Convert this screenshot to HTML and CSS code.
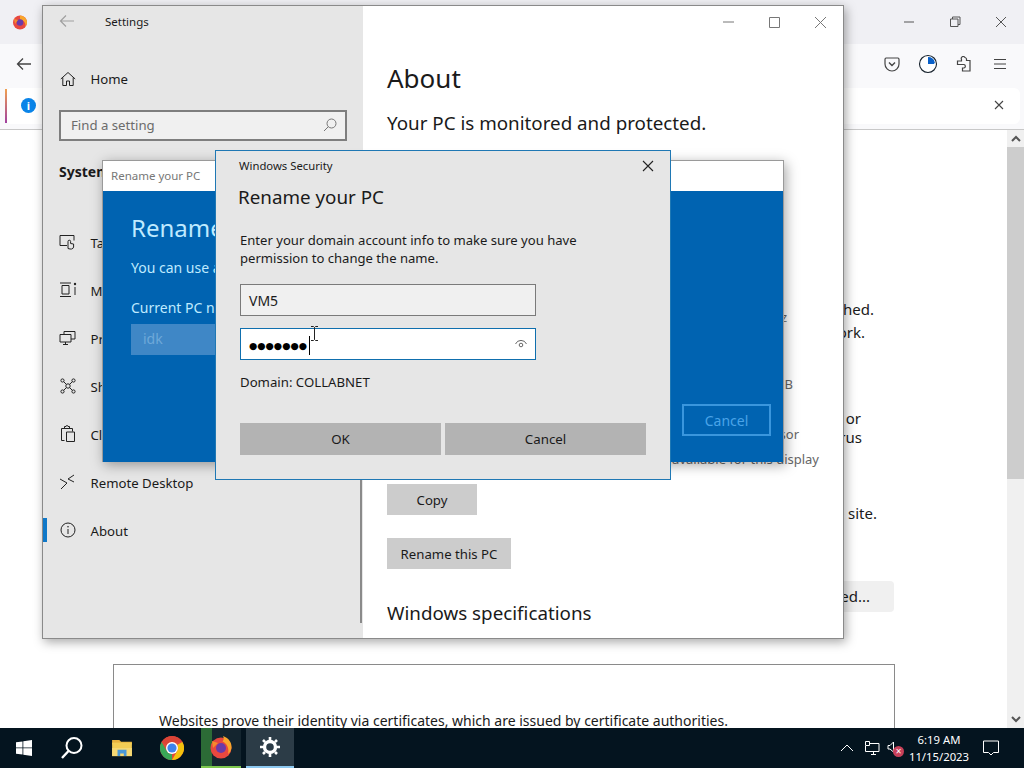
FILE: index.html
```html
<!DOCTYPE html>
<html lang="en">
<head>
<meta charset="utf-8">
<title>Rename your PC</title>
<link rel="stylesheet" href="styles.css">
</head>
<body>
<div class="desktop">
  <div class="browser">
    <div class="ff-title">
      <svg class="ff-logo" width="16" height="16" viewBox="0 0 16 16"><circle cx="8" cy="8.500" r="7" fill="#e8483f"/><path d="M8 1.500a7 7 0 0 1 7 7c0 1.500-.6 3-1.500 4 .3-3-1-6-5.500-7z" fill="#f9a52b"/><circle cx="8" cy="8.500" r="3.300" fill="#6b3aa8"/><path d="M2 5l4 1-3 4z" fill="#f58a2c"/></svg>
      <div class="win-ctrls ff-ctrls">
        <svg width="46" height="44" viewBox="0 0 46 44"><path d="M18 22h10" stroke="#555" fill="none"/></svg>
        <svg width="46" height="44" viewBox="0 0 46 44"><path d="M18.500 26.500h7.500v-7.500h-7.500zM20.500 19v-2h7.500v7.500h-2" stroke="#555" fill="none"/></svg>
        <svg width="46" height="44" viewBox="0 0 46 44"><path d="M18 17l10 10M28 17l-10 10" stroke="#555" fill="none"/></svg>
      </div>
    </div>
    <div class="ff-toolbar">
      <svg width="16" height="14" viewBox="0 0 16 14"><path d="M15 7H2M7 1.500L1.500 7 7 12.500" stroke="#444" stroke-width="1.300" fill="none"/></svg>
      <div class="ff-tools">
        <svg width="16" height="16" viewBox="0 0 16 16"><path d="M2 2h12a1.500 1.500 0 0 1 1 1.500V8a7 7 0 0 1-14 0V3.500A1.500 1.500 0 0 1 2 2z" stroke="#444" stroke-width="1.200" fill="none"/><path d="M5 6.500l3 3 3-3" stroke="#444" stroke-width="1.400" fill="none"/></svg>
        <svg width="20" height="20" viewBox="0 0 20 20"><circle cx="10" cy="10" r="8.500" fill="#fff" stroke="#15202b" stroke-width="1.100"/><path d="M10 3a7 7 0 0 1 6.800 5.500L16 10h-6z" fill="#0a60c8"/></svg>
        <svg width="16" height="16" viewBox="0 0 16 16"><path d="M9 1.500a2 2 0 0 1 1.500 1.500v1.500H14V15H6.500v-3H8a1.800 1.800 0 0 0 0-3.500H1.500V5h4V3.500A2 2 0 0 1 9 1.500z" stroke="#444" stroke-width="1.200" fill="none"/></svg>
        <svg class="ff-menu" width="14" height="12" viewBox="0 0 14 12"><path d="M1 1.500h12M1 6h12M1 10.500h12" stroke="#444" stroke-width="1.200"/></svg>
      </div>
    </div>
    <div class="ff-notice">
      <div class="notice-bar">
        <span class="notice-strip"></span>
        <span class="notice-info">i</span>
        <svg class="notice-x" width="10" height="10" viewBox="0 0 10 10"><path d="M1 1l8 8M9 1l-8 8" stroke="#444" stroke-width="1.100"/></svg>
      </div>
    </div>
    <div class="ff-page">
      <div class="page-main">
        <div class="page-text">
          <p class="pline p1">the certificate cannot be trusted or may be published.</p>
          <p class="pline p2">that it may be blocked on this network.</p>
          <p class="pline p3">the problem is most likely with the website, or</p>
          <p class="pline p4">may be caused by your anti-virus</p>
          <p class="pline p5">you can notify the administrator of the site.</p>
        </div>
        <div class="page-adv"><span class="adv-btn">Advanced...</span></div>
        <div class="page-card">Websites prove their identity via certificates, which are issued by certificate authorities.</div>
      </div>
      <div class="scrollbar">
        <div class="sb-up"><svg width="10" height="7" viewBox="0 0 10 7"><path d="M1 6l4-4 4 4" stroke="#555" stroke-width="2" fill="none"/></svg></div>
        <div class="sb-thumb"></div>
        <div class="sb-track"></div>
        <div class="sb-down"><svg width="10" height="7" viewBox="0 0 10 7"><path d="M1 1l4 4 4-4" stroke="#555" stroke-width="2" fill="none"/></svg></div>
      </div>
    </div>
  </div>

  <section class="settings">
    <nav class="set-nav">
      <div class="set-title">
        <svg width="16" height="14" viewBox="0 0 16 14"><path d="M15 7H2M7 1.500L1.500 7 7 12.500" stroke="#a0a0a0" stroke-width="1.200" fill="none"/></svg>
        <span>Settings</span>
      </div>
      <div class="nav-item nav-home">
        <svg width="16" height="16" viewBox="0 0 16 16"><path d="M.8 8L8 1.500 15.200 8M2.800 6.500V14.500H6.500V10h3v4.500h3.700V6.500" stroke="#222" fill="none"/></svg>
        <span>Home</span>
      </div>
      <div class="set-search"><span>Find a setting</span>
        <svg width="14" height="14" viewBox="0 0 14 14"><circle cx="8.500" cy="5.500" r="4.500" stroke="#777" fill="none"/><path d="M5.300 8.700L1 13" stroke="#777" fill="none"/></svg>
      </div>
      <div class="nav-head">System</div>
      <div class="nav-list">
        <div class="nav-item"><svg width="18" height="16" viewBox="0 0 18 16"><path d="M8 11.500H1V1.500h14v5" stroke="#222" fill="none"/><path d="M9 14.500v-7a1.300 1.300 0 0 1 2.600 0v2l3 .5v3a2.500 2.500 0 0 1-2 2H11z" stroke="#222" fill="#e6e6e6"/></svg><span>Tablet</span></div>
        <div class="nav-item"><svg width="18" height="16" viewBox="0 0 18 16"><path d="M1 1h11M1 14.500h11M3 3.500h7v8.500H3zM16 5v8" stroke="#222" fill="none"/><circle cx="16" cy="2" r="1.200" fill="#222"/></svg><span>Multitasking</span></div>
        <div class="nav-item"><svg width="18" height="16" viewBox="0 0 18 16"><path d="M5 4.500V1.500h11V9h-4M1 4.500h11V12H1zM4 14.500h5M6.500 12v2.500" stroke="#222" fill="none"/></svg><span>Projecting to this PC</span></div>
        <div class="nav-item"><svg width="16" height="16" viewBox="0 0 16 16"><g stroke="#222" fill="none"><circle cx="8" cy="8" r="2.200"/><circle cx="2.500" cy="2.500" r="1.600"/><circle cx="13.500" cy="2.500" r="1.600"/><circle cx="2.500" cy="13.500" r="1.600"/><circle cx="13.500" cy="13.500" r="1.600"/><path d="M3.700 3.700l2.700 2.700M12.300 3.700L9.600 6.400M3.700 12.300l2.700-2.700M12.300 12.300L9.600 9.600"/></g></svg><span>Shared experiences</span></div>
        <div class="nav-item"><svg width="16" height="18" viewBox="0 0 16 18"><g stroke="#222" fill="none"><path d="M4.500 15.500H1.500V3.500h11v3M4.500 3.500V1.500h1.500a1 1 0 0 1 2 0h1.500v2"/><path d="M6.500 7h8v9.500h-8z"/></g></svg><span>Clipboard</span></div>
        <div class="nav-item"><svg width="18" height="16" viewBox="0 0 18 16"><path d="M1 5l7 4-6 6M15 1L9 5l6 3" stroke="#222" fill="none"/></svg><span>Remote Desktop</span></div>
        <div class="nav-item nav-active"><svg width="16" height="16" viewBox="0 0 16 16"><circle cx="8" cy="8" r="7" stroke="#222" fill="none"/><path d="M8 7v5" stroke="#222"/><circle cx="8" cy="4.800" r=".8" fill="#222"/></svg><span>About</span></div>
      </div>
      <div class="nav-scroll"></div>
    </nav>
    <main class="set-main">
      <div class="set-ctrls win-ctrls">
        <svg width="46" height="32" viewBox="0 0 46 32"><path d="M18 16h11" stroke="#777" fill="none"/></svg>
        <svg width="46" height="32" viewBox="0 0 46 32"><path d="M18.500 11.500h10v10h-10z" stroke="#777" fill="none"/></svg>
        <svg width="46" height="32" viewBox="0 0 46 32"><path d="M18 11l11 11M29 11l-11 11" stroke="#777" fill="none"/></svg>
      </div>
      <h1 class="about-h">About</h1>
      <p class="about-sub">Your PC is monitored and protected.</p>
      <div class="specs">
        <p class="spec spec-1">3.40 GHz</p>
        <p class="spec spec-2">16.0 GB</p>
        <p class="spec spec-3">x64-based processor</p>
        <p class="spec spec-4">No pen or touch input is available for this display</p>
      </div>
      <button class="set-btn btn-copy">Copy</button>
      <button class="set-btn btn-rename">Rename this PC</button>
      <h2 class="spec-h">Windows specifications</h2>
    </main>
  </section>

  <section class="rename">
    <header class="rename-bar">Rename your PC</header>
    <div class="rename-body">
      <h2 class="rename-h">Rename your PC</h2>
      <p class="rename-p">You can use a combination of letters, hyphens and numbers.</p>
      <p class="rename-cur">Current PC name</p>
      <div class="rename-input">idk</div>
      <div class="rename-actions"><span class="rename-cancel">Cancel</span></div>
    </div>
  </section>

  <section class="security">
    <header class="sec-head">
      <span>Windows Security</span>
      <svg width="12" height="12" viewBox="0 0 12 12"><path d="M1 1l10 10M11 1L1 11" stroke="#222" stroke-width="1.100" fill="none"/></svg>
    </header>
    <h2 class="sec-h">Rename your PC</h2>
    <p class="sec-p">Enter your domain account info to make sure you have<br>permission to change the name.</p>
    <div class="sec-input sec-user">VM5</div>
    <div class="sec-input sec-pass">
      <span class="dots">●●●●●●●</span><span class="caret"></span>
      <svg class="eye" width="14" height="12" viewBox="0 0 14 12"><path d="M1.500 6a6 6 0 0 1 11 0" stroke="#666" fill="none"/><circle cx="7" cy="7" r="1.800" stroke="#666" fill="none"/></svg>
    </div>
    <p class="sec-domain">Domain: COLLABNET</p>
    <div class="sec-actions">
      <button class="sec-btn">OK</button>
      <button class="sec-btn">Cancel</button>
    </div>
  </section>

  <svg class="ibeam" width="9" height="15" viewBox="0 0 9 15"><path d="M1 .5h2.500l1 1 1-1H8M4.500 1.500v12M1 14.500h2.500l1-1 1 1H8" stroke="#222" fill="none"/></svg>

  <footer class="taskbar">
    <div class="task-apps">
      <div class="task-btn"><svg width="16" height="16" viewBox="0 0 16 16"><path d="M0 2.300l6.500-.9v6.100H0zM7.300 1.300L16 0v7.500H7.300zM0 8.300h6.500v6.200L0 13.700zM7.300 8.300H16V16l-8.700-1.200z" fill="#fff"/></svg></div>
      <div class="task-btn"><svg width="24" height="24" viewBox="0 0 24 24"><circle cx="14" cy="9.500" r="7.500" stroke="#fff" stroke-width="2" fill="none"/><path d="M8.500 15L2 22" stroke="#fff" stroke-width="2.400" fill="none"/></svg></div>
      <div class="task-btn task-wide task-folder"><svg width="22" height="18" viewBox="0 0 24 20"><path d="M1 1h8l2 2h12v3H1z" fill="#e8b23e"/><path d="M1 4h22v15H1z" fill="#f3cd55"/><path d="M1 10h22v9H1z" fill="#f6d874"/><path d="M7 19v-7h10v7h-3v-3h-4v3z" fill="#4a98d8"/></svg></div>
      <div class="task-btn task-wide"><svg width="24" height="24" viewBox="0 0 24 24"><circle cx="12" cy="12" r="12" fill="#e04a3a"/><path d="M12 0a12 12 0 0 1 10.400 6H12a6 6 0 0 0-5.200 3L2 6a12 12 0 0 1 10-6z" fill="#db4437"/><path d="M22.400 6A12 12 0 0 1 12 24l5.200-9A6 6 0 0 0 17 9z" fill="#f4c20d"/><path d="M12 24A12 12 0 0 1 1.600 6l5.200 9a6 6 0 0 0 5.200 3z" fill="#3aa757"/><circle cx="12" cy="12" r="6" fill="#fff"/><circle cx="12" cy="12" r="4.600" fill="#3f83ee"/></svg></div>
      <div class="task-btn task-ff"><svg width="24" height="24" viewBox="0 0 24 24"><circle cx="12" cy="13" r="10.500" fill="#e8483f"/><path d="M14 1c6 2 9 7 8.500 12-.5 3-2 5-3.500 6 1.500-5-1-11-5.500-12.500C15 5 15 3 14 1z" fill="#f9a52b"/><circle cx="12" cy="13" r="5" fill="#6b3aa8"/><path d="M3 6l6 2-5 5z" fill="#f58a2c"/></svg></div>
      <div class="task-btn task-set"><svg width="20" height="20" viewBox="0 0 20 20"><circle cx="10" cy="10" r="5.500" stroke="#fff" stroke-width="3.400" fill="none"/><path d="M10 0v20M0 10h20M3 3l14 14M17 3L3 17" stroke="#fff" stroke-width="2.600" stroke-dasharray="3 14 3"/></svg></div>
    </div>
    <div class="tray">
      <svg width="14" height="8" viewBox="0 0 14 8"><path d="M1 7l6-6 6 6" stroke="#fff" fill="none"/></svg>
      <svg class="tray-net" width="17" height="15" viewBox="0 0 17 15"><path d="M2.500 4.500V.5h4v4zM7 2.500h9v8H2.500V5M8 13.500h5M10.500 10.500v3" stroke="#fff" fill="none"/></svg>
      <span class="tray-vol">
        <svg width="10" height="14" viewBox="0 0 10 14"><path d="M2 4.500h2L7.500 1v10L4 8H2z" stroke="#fff" fill="none"/></svg>
        <span class="vol-x">×</span>
      </span>
      <div class="clock"><span>6:19 AM</span><span>11/15/2023</span></div>
      <svg class="tray-note" width="16" height="16" viewBox="0 0 16 16"><path d="M.5 1h15v11.500h-5L8 15l-2.500-2.500h-5z" stroke="#fff" fill="none"/></svg>
    </div>
  </footer>
</div>
</body>
</html>
```
FILE: styles.css
```css
* { box-sizing: border-box; }
html, body { margin: 0; padding: 0; }
body { width: 1024px; height: 768px; overflow: hidden; font-family: "Noto Sans", "Open Sans", sans-serif; color: #1a1a1a; background: #fff; }
p, h1, h2 { margin: 0; font-weight: 400; }
button { font: inherit; color: inherit; border: 0; padding: 0; }
.desktop { position: relative; width: 1024px; height: 768px; display: flex; flex-direction: column; overflow: hidden; }

/* Browser */
.browser { height: 728px; display: flex; flex-direction: column; }
.ff-title { height: 44px; flex: none; background: #f0f0f4; display: flex; align-items: center; justify-content: space-between; padding-left: 12px; }
.win-ctrls { display: flex; }
.ff-toolbar { height: 44px; flex: none; background: #f9f9fb; display: flex; align-items: center; justify-content: space-between; padding: 0 17px 4px 16px; }
.ff-tools { display: flex; align-items: center; gap: 18px; }
.ff-menu { margin-left: 3px; }
.ff-notice { height: 42px; flex: none; background: #f9f9fb; border-bottom: 1px solid #c8c8c8; padding: 0 4px 4px 5px; }
.notice-bar { height: 36px; background: #fff; border-radius: 6px; display: flex; align-items: center; position: relative; padding: 0 0 2px 16px; }
.notice-strip { position: absolute; left: 0; top: 1px; width: 2px; height: 34px; background: linear-gradient(#f0a050, #a040a0); }
.notice-info { width: 15px; height: 15px; border-radius: 50%; background: #0a84e8; color: #fff; font-size: 11px; font-weight: 700; line-height: 15px; text-align: center; }
.notice-x { margin-left: auto; margin-right: 16px; }
.ff-page { flex: 1; display: flex; min-height: 0; }
.page-main { flex: 1; display: flex; flex-direction: column; padding-left: 113px; min-width: 0; overflow: hidden; }
.page-text { flex: none; width: 764px; height: 451px; padding-top: 168px; font-size: 15px; text-align: right; }
.pline { height: 23px; line-height: 23px; white-space: nowrap; }
.p1 { width: 761px; }
.p2 { width: 752px; }
.p3 { margin-top: 65px; height: 19px; line-height: 19px; width: 748px; }
.p4 { height: 19px; line-height: 19px; width: 749px; }
.p5 { margin-top: 55px; width: 764px; }
.page-adv { flex: none; width: 781px; display: flex; justify-content: flex-end; }
.adv-btn { width: 180px; height: 31px; background: #f0f0f0; border-radius: 4px; font-size: 15px; line-height: 31px; text-align: right; padding-right: 24px; }
.page-card { margin-top: 52px; width: 782px; flex: 1; border: 1px solid #8a8a8a; border-bottom: 0; padding: 46px 0 0 45px; font-size: 14px; line-height: 20px; white-space: nowrap; }
.scrollbar { width: 17px; background: #f0f0f0; display: flex; flex-direction: column; align-items: center; }
.sb-up, .sb-down { height: 17px; flex: none; display: flex; align-items: center; justify-content: center; }
.sb-thumb { width: 100%; height: 332px; background: #cdcdcd; }
.sb-track { flex: 1; }

/* Settings */
.settings { position: absolute; left: 42px; top: 5px; width: 802px; height: 634px; display: flex; border: 1px solid #8a8a8a; background: #fff; box-shadow: 2px 3px 10px rgba(0,0,0,.35); }
.set-nav { width: 320px; flex: none; background: #e6e6e6; position: relative; }
.set-title { height: 30px; display: flex; align-items: center; font-size: 11.500px; padding-left: 16px; }
.set-title span { margin-left: 30px; }
.nav-item { height: 48px; display: flex; align-items: center; padding-left: 16px; font-size: 13.200px; }
.nav-item svg { width: 18px; flex: none; }
.nav-item span { margin-left: 13.500px; }
.nav-list .nav-item span { margin-top: 2px; }
.nav-home { margin-top: 19px; }
.set-search { margin: 7px 0 0 16px; width: 288px; height: 31px; border: 2px solid #7e7e7e; background: #f0f0f0; display: flex; align-items: center; justify-content: space-between; padding: 0 8px 1px 10px; font-size: 13.200px; color: #6b6b6b; }
.nav-head { margin-top: 21px; padding-left: 16px; font-size: 14px; font-weight: 700; height: 20px; line-height: 20px; }
.nav-list { margin-top: 36px; }
.nav-active { position: relative; }
.nav-active::before { content: ""; position: absolute; left: 0; top: 12px; width: 4px; height: 24px; background: #0f78c8; }
.nav-scroll { position: absolute; right: 1px; top: 471px; width: 2px; height: 146px; background: #8a8a8a; }
.set-main { flex: 1; position: relative; padding: 0 0 0 24px; overflow: hidden; }
.set-ctrls { position: absolute; right: 0; top: 0; }
.about-h { margin-top: 53px; font-size: 26px; line-height: 38px; }
.about-sub { margin-top: 12px; font-size: 18.800px; line-height: 28px; }
.specs { height: 347px; padding-top: 170px; font-size: 13px; color: #666; white-space: nowrap; }
.spec { height: 20px; line-height: 20px; text-align: right; }
.spec-1 { width: 400px; }
.spec-2 { width: 406px; margin-top: 47px; }
.spec-3 { width: 412px; margin-top: 30px; }
.spec-4 { width: 432px; margin-top: 5px; }
.set-btn { display: block; background: #cccccc; height: 31px; font-size: 13.200px; }
.btn-copy { width: 90px; }
.btn-rename { width: 124px; margin-top: 23px; }
.spec-h { margin-top: 30px; font-size: 18.800px; line-height: 28px; }

/* Rename dialog */
.rename { position: absolute; left: 102px; top: 160px; width: 682px; height: 302px; border: 1px solid #9a9a9a; border-bottom: 0; background: #0063b1; box-shadow: 2px 3px 12px rgba(0,0,0,.35); display: flex; flex-direction: column; }
.rename-bar { height: 30px; flex: none; background: #fff; color: #777; font-size: 11.500px; line-height: 30px; padding-left: 8px; }
.rename-body { flex: 1; padding: 0 12px 0 28px; color: #bfeaff; }
.rename-h { margin-top: 21px; font-size: 24px; line-height: 32px; }
.rename-p { margin-top: 14px; font-size: 14px; line-height: 20px; }
.rename-cur { margin-top: 20px; font-size: 14px; line-height: 20px; }
.rename-input { margin-top: 6px; width: 300px; height: 31px; background: #3f87c6; color: #6ea9d9; font-size: 14px; line-height: 29px; padding-left: 12px; }
.rename-actions { margin-top: 49px; display: flex; justify-content: flex-end; }
.rename-cancel { width: 89px; height: 32px; border: 2px solid #3a96dd; color: #4aa3e8; font-size: 14px; line-height: 30px; text-align: center; }

/* Security */
.security { position: absolute; left: 215px; top: 150px; width: 456px; height: 330px; background: #e6e6e6; border: 1px solid #1f78b4; padding: 0 24px; }
.sec-head { height: 30px; display: flex; align-items: center; justify-content: space-between; font-size: 11.300px; margin: 0 -8px 0 -1px; }
.sec-head span { margin-top: -2px; }
.sec-h { margin: 1px 0 0 -2px; font-size: 18.800px; line-height: 30px; }
.sec-p { margin-top: 19px; font-size: 13.080px; line-height: 18px; }
.sec-input { width: 296px; height: 32px; display: flex; align-items: center; padding-left: 8px; font-size: 14px; }
.sec-user { margin-top: 17px; background: #f0f0f0; border: 1px solid #7a7a7a; }
.sec-pass { margin-top: 12px; background: #fff; border: 1px solid #0f6fae; position: relative; }
.dots { font-size: 9.500px; font-family: "DejaVu Sans", sans-serif; line-height: 1; color: #000; margin-top: 3px; }
.caret { width: 1px; height: 19px; background: #000; margin-left: 2px; margin-top: 3px; }
.eye { margin-left: auto; margin-right: 7px; }
.sec-domain { margin-top: 12px; font-size: 13.200px; line-height: 20px; }
.sec-actions { margin-top: 31px; display: flex; gap: 4px; width: 406px; }
.sec-btn { flex: 1; height: 32px; background: #b3b3b3; font-size: 13.300px; }

.ibeam { position: absolute; left: 310px; top: 326px; }

/* Taskbar */
.taskbar { height: 40px; flex: none; background: #04141f; color: #fff; display: flex; justify-content: space-between; align-items: stretch; }
.task-apps { display: flex; }
.task-btn { width: 48px; display: flex; align-items: center; justify-content: center; }
.task-wide { width: 50px; }
.task-folder { margin-left: 1px; }
.task-ff { width: 40px; margin: 0 5px 0 4px; background: #14252f; border-bottom: 2px solid #7ec84e; box-shadow: inset 11px 0 0 #2c6b36; }
.task-set { background: #2c3c47; border-bottom: 2px solid #8cc8f0; }
.tray { display: flex; align-items: center; padding-right: 25px; }
.tray-net { margin-left: 9px; }
.tray-vol { margin-left: 6px; position: relative; display: flex; width: 21px; height: 14px; }
.vol-x { position: absolute; left: 7px; top: 5px; width: 11px; height: 11px; border-radius: 50%; background: #c8405a; font-size: 10px; line-height: 11px; text-align: center; }
.clock { display: flex; flex-direction: column; align-items: center; width: 64px; font-size: 11.300px; line-height: 17px; }
.tray-note { margin-left: 12px; }
```
